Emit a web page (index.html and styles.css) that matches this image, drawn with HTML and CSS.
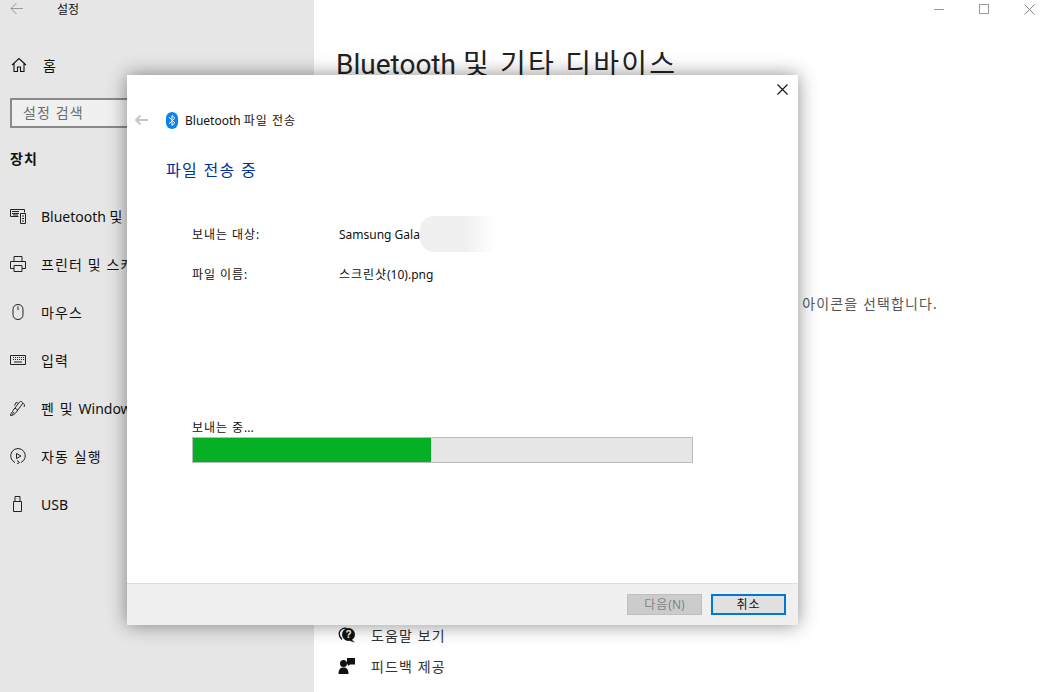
FILE: index.html
```html
<!DOCTYPE html>
<html lang="ko">
<head>
<meta charset="utf-8">
<title>설정</title>
<link rel="stylesheet" href="styles.css">
</head>
<body>
<div class="app">
  <aside class="sidebar">
    <div class="titlebar">
      <svg class="back-ic" width="18" height="14" viewBox="0 0 18 14"><path d="M13 6.500H1M6.500 1 1 6.500l5.500 5.500" fill="none" stroke="#999" stroke-width="1"/></svg>
      <span class="app-title">설정</span>
    </div>
    <div class="nav-row home">
      <svg class="nav-ic" width="16" height="16" viewBox="0 0 16 16"><path d="M1 8 8 1.500 15 8M3 6.500V14.500H6.500V10H9.500V14.500H13V6.500" fill="none" stroke="#111" stroke-width="1.100"/></svg>
      <span class="ko">홈</span>
    </div>
    <div class="search ko">설정 검색</div>
    <div class="section ko">장치</div>
    <nav class="nav">
      <div class="nav-row">
        <svg class="nav-ic" width="16" height="16" viewBox="0 0 16 16"><path d="M.500 1.500H14.500V4.500M.500 1.500V8.500H8.500M10.500 5.500H15.500V15.500H10.500ZM2 3.500H9M2 5.500H9M3 7H8M12 8H14M12 10.500H14M12 13H14" fill="none" stroke="#222" stroke-width="1"/></svg>
        <span>Bluetooth <span class="ko">및 기타 디바이스</span></span>
      </div>
      <div class="nav-row">
        <svg class="nav-ic" width="16" height="16" viewBox="0 0 16 16"><path d="M4 5V.500H12V5M4 12.500H.500V5.500H15.500V12.500H12M4 9.500H12V15.500H4Z" fill="none" stroke="#222" stroke-width="1"/></svg>
        <span class="ko">프린터 및 스캐너</span>
      </div>
      <div class="nav-row">
        <svg class="nav-ic" width="16" height="16" viewBox="0 0 16 16"><path d="M3 5.500C3 2.500 5 .500 8 .500S13 2.500 13 5.500V10.500C13 13.500 11 15.500 8 15.500S3 13.500 3 10.500ZM8 2.500V6" fill="none" stroke="#222" stroke-width="1"/></svg>
        <span class="ko">마우스</span>
      </div>
      <div class="nav-row">
        <svg class="nav-ic" width="16" height="16" viewBox="0 0 16 16"><path d="M.500 3.500H15.500V12.500H.500ZM2 5.500H14M2 7.500H14M4 10H12" fill="none" stroke="#222" stroke-width="1"/><path d="M2 5.500H14M2 7.500H14" stroke="#e6e6e6" stroke-width="1" stroke-dasharray="1 1"/></svg>
        <span class="ko">입력</span>
      </div>
      <div class="nav-row">
        <svg class="nav-ic" width="16" height="16" viewBox="0 0 16 16"><path d="M.500 15.500C.500 13 2.500 12.500 3 10.500L9.500 2C10.800.500 13.300 2 12.300 4L6 12.500C4.500 14.500 2.500 15.500.500 15.500ZM8 3.500 6.500 2 4.500 5.500M5 8 8 10.500M12.500 3.500C14.500 3.500 15 5 14 7M2 14.500C3 14 3.500 13 4 12" fill="none" stroke="#222" stroke-width="1"/></svg>
        <span><span class="ko">펜 및 </span>Windows Ink</span>
      </div>
      <div class="nav-row">
        <svg class="nav-ic" width="16" height="16" viewBox="0 0 16 16"><path d="M5 14.500A7.300 7.300 0 1 1 11 14.500M7 12.500 9.500 14.500 7 16M6.500 5.500 11 8 6.500 10.500Z" fill="none" stroke="#222" stroke-width="1"/></svg>
        <span class="ko">자동 실행</span>
      </div>
      <div class="nav-row">
        <svg class="nav-ic" width="16" height="16" viewBox="0 0 16 16"><path d="M3.500 5.500H11.500V15.500H3.500ZM5 5.500V.500H10V5.500M6.500 2.500H6.700M8.300 2.500H8.500" fill="none" stroke="#222" stroke-width="1"/></svg>
        <span>USB</span>
      </div>
    </nav>
  </aside>

  <main class="main">
    <div class="win-controls">
      <span class="win-min"></span>
      <span class="win-max"></span>
      <svg width="11" height="11" viewBox="0 0 11 11"><path d="M.500 .500 10.500 10.500M10.500 .500 .500 10.500" stroke="#888" stroke-width="1"/></svg>
    </div>
    <h1 class="page-title">Bluetooth <span class="ko">및 기타 디바이스</span></h1>
    <p class="hint ko">아이콘을 선택합니다.</p>
    <div class="links">
      <div class="link">
        <svg width="18" height="16" viewBox="0 0 18 16"><path d="M4 12.500C1.500 10 .500 8 1.500 5S6 .500 9 1.500" fill="none" stroke="#111" stroke-width="1.300"/><circle cx="10.500" cy="7.500" r="6.500" fill="#111"/><path d="M13 12 17 15.500 12 14Z" fill="#111"/><text x="10.500" y="11" class="q">?</text></svg>
        <span class="ko">도움말 보기</span>
      </div>
      <div class="link">
        <svg width="18" height="16" viewBox="0 0 18 16"><circle cx="5.500" cy="5.500" r="3.500" fill="#111"/><path d="M.500 16C.500 11 2.500 9.500 5.500 9.500S10.500 11 10.500 16Z" fill="#111"/><path d="M9 0H17V6.500H12L10 8V6.500H9Z" fill="#111"/></svg>
        <span class="ko">피드백 제공</span>
      </div>
    </div>
  </main>
</div>

<section class="dialog">
  <div class="dlg-close">
    <svg width="11" height="11" viewBox="0 0 11 11"><path d="M.500 .500 10.500 10.500M10.500 .500 .500 10.500" stroke="#111" stroke-width="1.100"/></svg>
  </div>
  <div class="dlg-head">
    <svg width="16" height="12" viewBox="0 0 16 12"><path d="M14 6H2M6.500 1.500 2 6l4.500 4.500" fill="none" stroke="#c4c4c4" stroke-width="1.800"/></svg>
    <svg class="bt" width="12" height="17" viewBox="0 0 12 17"><rect width="12" height="17" rx="6" fill="#0a84e8"/><path d="M3 5.200 8.800 10.800 6 13.500V3.500L8.800 6.200 3 11.800" fill="none" stroke="#fff" stroke-width="1"/></svg>
    <span>Bluetooth <span class="ko">파일 전송</span></span>
  </div>
  <h2 class="dlg-title ko">파일 전송 중</h2>
  <div class="dlg-body">
    <div class="info">
      <span class="ko">보내는 대상:</span>
      <span class="target">Samsung Galaxy<i class="blur"></i></span>
      <span class="ko">파일 이름:</span>
      <span><span class="ko">스크린샷</span>(10).png</span>
    </div>
    <div class="progress-label"><span class="ko">보내는 중</span>...</div>
    <div class="progress"><div class="bar" style="width:47.600%"></div></div>
  </div>
  <div class="dlg-foot">
    <button class="btn disabled"><span class="ko">다음</span>(N)</button>
    <button class="btn primary ko">취소</button>
  </div>
</section>
</body>
</html>
```
FILE: styles.css
```css
* { box-sizing: border-box; }
html, body { margin: 0; height: 100%; }
body {
  position: relative;
  width: 1048px;
  height: 692px;
  overflow: hidden;
  background: #fff;
  color: #111;
  font-family: "Noto Sans", "Noto Sans CJK KR", sans-serif;
  font-size: 14px;
}
.ko { letter-spacing: .08em; }
.app { display: flex; height: 692px; }
.sidebar {
  width: 314px;
  flex: none;
  background: #e6e6e6;
  overflow: hidden;
}
.titlebar {
  height: 48px;
  display: flex;
  align-items: flex-start;
  padding: 2px 0 0 10px;
}
.app-title { margin: 1px 0 0 29px; font-size: 12px; line-height: 14px; }
.nav-row {
  display: flex;
  align-items: center;
  height: 48px;
  padding-left: 10px;
  white-space: nowrap;
}
.nav-row .nav-ic { flex: none; margin-right: 15px; }
.home { height: 34px; padding-left: 11px; }
.home .nav-ic { margin-right: 16px; }
.search {
  width: 290px;
  height: 30px;
  margin: 16px 0 0 10px;
  border: 2px solid #8a8a8a;
  background: #f0f0f0;
  color: #6b6b6b;
  padding-left: 11px;
  line-height: 26px;
}
.section {
  font-weight: 700;
  margin: 21px 0 0 10px;
  line-height: 20px;
}
.nav { margin-top: 23px; }
.main {
  flex: 1;
  position: relative;
  padding-left: 22px;
  display: flex;
  flex-direction: column;
}
.win-controls {
  display: flex;
  align-items: center;
  justify-content: flex-end;
  gap: 35px;
  height: 18px;
  padding-right: 13px;
}
.win-min { width: 10px; height: 1px; background: #999; }
.win-max { width: 10px; height: 10px; border: 1px solid #999; }
.page-title {
  margin: 27px 0 0;
  font-family: "Roboto", "Noto Sans CJK KR", sans-serif;
  font-size: 28px;
  font-weight: 400;
  line-height: 40px;
  color: #222;
  white-space: nowrap;
}
.hint {
  margin: 209px 0 0;
  align-self: flex-end;
  padding-right: 110px;
  line-height: 20px;
  color: #555;
}
.links { margin-top: auto; padding-bottom: 11px; }
.link {
  display: flex;
  align-items: center;
  gap: 15px;
  height: 31px;
  padding-left: 2px;
  color: #333;
}
.q { font: 700 10px "Liberation Sans", sans-serif; fill: #fff; text-anchor: middle; }

.dialog {
  position: absolute;
  left: 127px;
  top: 75px;
  width: 671px;
  height: 550px;
  background: #fff;
  box-shadow: 0 0 18px rgba(0, 0, 0, .45);
  display: flex;
  flex-direction: column;
  font-size: 12px;
}
.dlg-close { position: absolute; right: 10px; top: 9px; line-height: 0; }
.dlg-head {
  display: flex;
  align-items: center;
  height: 18px;
  margin: 36px 0 0 7px;
}
.bt { margin: 0 7px 0 16px; }
.dlg-title {
  margin: 30px 0 0 39px;
  font-size: 16px;
  font-weight: 400;
  line-height: 22px;
  color: #003399;
}
.dlg-body { flex: 1; padding: 0 105px 0 65px; }
.info {
  display: grid;
  grid-template-columns: 147px 1fr;
  row-gap: 22px;
  margin-top: 45px;
  line-height: 18px;
}
.target { position: relative; }
.blur {
  position: absolute;
  left: 81px;
  top: -10px;
  width: 75px;
  height: 36px;
  border-radius: 14px 0 0 14px;
  background: linear-gradient(90deg, #f0f0f0 60%, #fff);
}
.progress-label { margin-top: 135px; line-height: 18px; }
.progress {
  height: 26px;
  border: 1px solid #bcbcbc;
  background: #e6e6e6;
}
.bar { height: 100%; background: #06b025; }
.dlg-foot {
  height: 42px;
  flex: none;
  background: #f0f0f0;
  border-top: 1px solid #dfdfdf;
  display: flex;
  justify-content: flex-end;
  align-items: center;
  gap: 9px;
  padding: 0 12px;
}
.btn {
  width: 75px;
  height: 21px;
  padding: 0;
  font: inherit;
  line-height: 17px;
}
.disabled { background: #cccccc; border: 1px solid #bfbfbf; color: #838383; }
.primary { background: #e1e1e1; border: 2px solid #0078d7; color: #111; }
```
